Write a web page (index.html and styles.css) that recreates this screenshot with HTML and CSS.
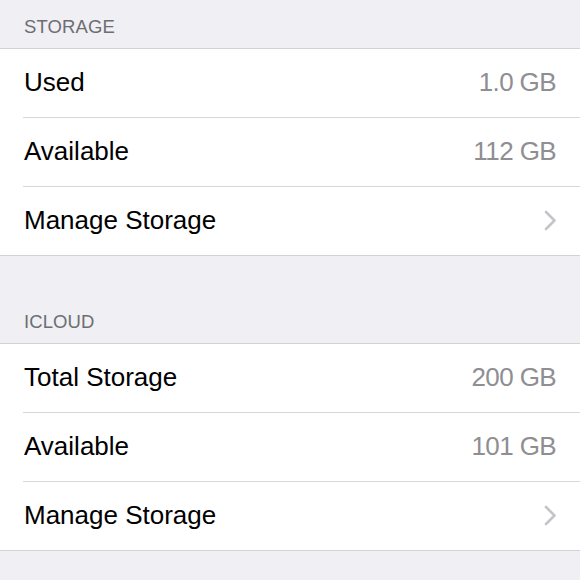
FILE: index.html
```html
<!DOCTYPE html>
<html>
<head>
<meta charset="utf-8">
<link rel="stylesheet" href="styles.css">
</head>
<body>
<div class="section-header first">STORAGE</div>
<div class="group">
  <div class="row"><span class="label">Used</span><span class="value">1.0 GB</span></div>
  <div class="row"><span class="label">Available</span><span class="value">112 GB</span></div>
  <div class="row"><span class="label">Manage Storage</span><svg class="chevron" width="13" height="21" viewBox="0 0 13 21"><polyline points="2,2 10.5,10.5 2,19" fill="none" stroke="#c4c4c9" stroke-width="2.6" stroke-linecap="round" stroke-linejoin="round"/></svg></div>
</div>
<div class="section-header">ICLOUD</div>
<div class="group">
  <div class="row"><span class="label">Total Storage</span><span class="value">200 GB</span></div>
  <div class="row"><span class="label">Available</span><span class="value">101 GB</span></div>
  <div class="row"><span class="label">Manage Storage</span><svg class="chevron" width="13" height="21" viewBox="0 0 13 21"><polyline points="2,2 10.5,10.5 2,19" fill="none" stroke="#c4c4c9" stroke-width="2.6" stroke-linecap="round" stroke-linejoin="round"/></svg></div>
</div>
</body>
</html>
```
FILE: styles.css
```css
html, body {
  margin: 0;
  padding: 0;
  background: #efeff4;
  font-family: "Liberation Sans", Arial, sans-serif;
}
.section-header {
  height: 87px;
  box-sizing: border-box;
  display: flex;
  align-items: flex-end;
  padding: 0 0 12px 24px;
  font-size: 18.5px;
  line-height: 18px;
  color: #6d6d72;
  letter-spacing: 0.1px;
}
.section-header.first {
  height: 48px;
}
.group {
  background: #fff;
  border-top: 1px solid #d1d1d6;
  border-bottom: 1px solid #d1d1d6;
}
.row {
  height: 68px;
  box-sizing: border-box;
  display: flex;
  align-items: center;
  justify-content: space-between;
  padding: 0 23px 2px 24px;
  font-size: 26px;
  line-height: 30px;
  color: #000;
}
.row + .row {
  height: 69px;
  padding-top: 1px;
  background-image: linear-gradient(#d8d8dc, #d8d8dc);
  background-size: calc(100% - 23px) 1px;
  background-position: 23px 0;
  background-repeat: no-repeat;
}
.value {
  color: #8e8e93;
  letter-spacing: -0.6px;
  margin-right: 1px;
}
.chevron {
  display: block;
}
```
